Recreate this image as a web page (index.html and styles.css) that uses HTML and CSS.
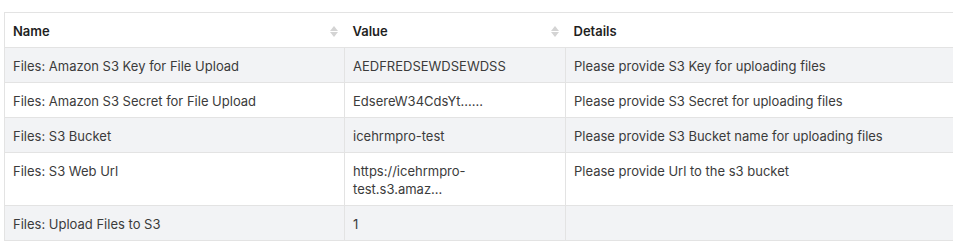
FILE: index.html
```html
<!DOCTYPE html>
<html>
<head>
<meta charset="utf-8">
<link rel="stylesheet" href="styles.css">
</head>
<body>
<div class="wrap">
<table class="grid">
  <colgroup><col class="c1"><col class="c2"><col class="c3"></colgroup>
  <thead>
    <tr>
      <th><div class="th-in"><span>Name</span><span class="sort"><i class="up"></i><i class="down"></i></span></div></th>
      <th><div class="th-in"><span>Value</span><span class="sort"><i class="up"></i><i class="down"></i></span></div></th>
      <th><div class="th-in"><span>Details</span></div></th>
    </tr>
  </thead>
  <tbody>
    <tr class="odd"><td>Files: Amazon S3 Key for File Upload</td><td>AEDFREDSEWDSEWDSS</td><td>Please provide S3 Key for uploading files</td></tr>
    <tr><td>Files: Amazon S3 Secret for File Upload</td><td>EdsereW34CdsYt......</td><td>Please provide S3 Secret for uploading files</td></tr>
    <tr class="odd"><td>Files: S3 Bucket</td><td>icehrmpro-test</td><td>Please provide S3 Bucket name for uploading files</td></tr>
    <tr><td>Files: S3 Web Url</td><td>https://icehrmpro-<br>test.s3.amaz...</td><td>Please provide Url to the s3 bucket</td></tr>
    <tr class="odd"><td>Files: Upload Files to S3</td><td>1</td><td></td></tr>
  </tbody>
</table>
</div>
</body>
</html>
```
FILE: styles.css
```css
html, body { margin: 0; padding: 0; background: #fff; }
body { font-family: Inter, "Liberation Sans", Arial, sans-serif; font-size: 13px; color: #3b3b3b; overflow: hidden; }
.wrap { padding: 12px 0 0 4px; width: 949px; overflow: hidden; }
.grid { border-collapse: collapse; table-layout: fixed; width: 990px; }
.c1 { width: 340px; }
.c2 { width: 221px; }
.c3 { width: 429px; }
.grid th, .grid td { padding: 9px 8px 7px; line-height: 18px; text-align: left; vertical-align: top; border: 1px solid #e3e3e3; }
.grid th { font-weight: 600; color: #1f1f1f; border-left: none; border-right: none; background: #fff; }
.grid th:first-child { border-left: 1px solid #e3e3e3; }
.grid td { font-weight: normal; }
.grid tr.odd td { background: #f2f3f5; }
.th-in { display: flex; justify-content: space-between; align-items: center; }
.sort { display: flex; flex-direction: column; align-items: center; gap: 1px; margin-right: -1px; }
.sort i { display: block; width: 0; height: 0; border-left: 4px solid transparent; border-right: 4px solid transparent; }
.sort .up { border-bottom: 5px solid #d4d4d4; }
.sort .down { border-top: 5px solid #d4d4d4; }
```
